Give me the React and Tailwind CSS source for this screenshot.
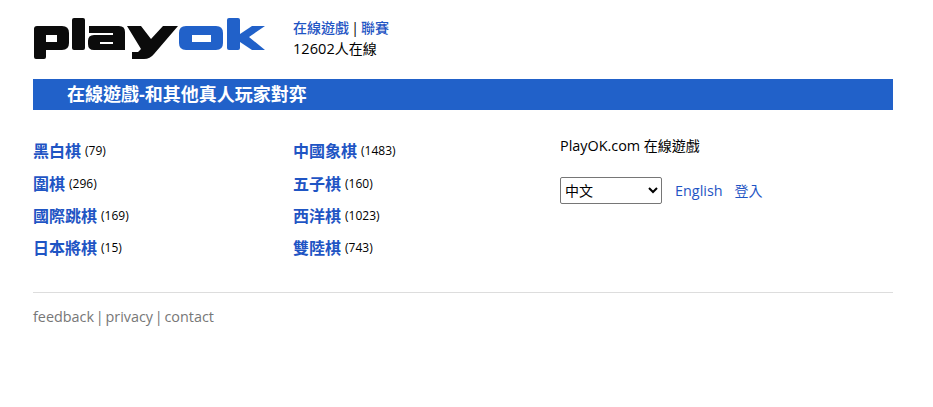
import React from 'react';

const LINK = 'text-[#1f55c4] no-underline';

const gamesLeft = [
  ['黑白棋', 79],
  ['圍棋', 296],
  ['國際跳棋', 169],
  ['日本將棋', 15],
];

const gamesRight = [
  ['中國象棋', 1483],
  ['五子棋', 160],
  ['西洋棋', 1023],
  ['雙陸棋', 743],
];

// playok logo
const Logo = () => (
  <svg width="234" height="46" viewBox="0 0 234 46" className="block">
    <g fill="#0b0b0b" fillRule="evenodd">
      <path d="M4 9 H29 Q36 9 36 16 V26 Q36 33 29 33 H13 V40 Q13 42 11 42 H3 Q1 42 1 40 V12 Q1 9 4 9 Z M13 18 V25 H24 V18 Z" />
      <rect x="39" y="1" width="13" height="32" rx="2" />
      <path d="M56 9 H86 Q92 9 92 15 V33 H61 Q55 33 55 27 V24 Q55 18 61 18 H80 V16 H56 Z M67 25 V27 H80 V25 Z" />
      <path d="M94 9 H108 L118 22 L130 9 H145 L121 37 Q117 42 111 42 H99 V35 H105 L108 32 Z" />
    </g>
    <g fill="#2161c9" fillRule="evenodd">
      <path d="M153 9 H183 Q190 9 190 16 V26 Q190 33 183 33 H153 Q146 33 146 26 V16 Q146 9 153 9 Z M159 18 V25 H178 V18 Z" />
      <rect x="194" y="1" width="13" height="32" rx="2" />
      <path d="M207 17 L219 9 H232 L216 20 L232 33 H219 L207 25 Z" />
    </g>
  </svg>
);

const GameList = ({ games }) => (
  <ul className="flex flex-col">
    {games.map(([name, count]) => (
      <li key={name} className="h-[32.4px] flex items-center">
        <a href="#" className={`${LINK} text-[16px] font-bold`}>{name}</a>
        <span className="text-[12px] ml-1 text-black">({count})</span>
      </li>
    ))}
  </ul>
);

export default function App() {
  return (
    <div className="px-[33px] w-[926px] bg-white text-black text-[14px] font-['Open_Sans','Noto_Sans_CJK_TC',sans-serif]">
      <div className="flex pt-[17px] h-[79px]">
        <div className="w-[260px]">
          <Logo />
        </div>
        <div className="leading-[21px]">
          <div className="[word-spacing:-1.5px]">
            <a href="#" className={`${LINK} font-medium`}>在線遊戲</a>
            {' | '}
            <a href="#" className={`${LINK} font-medium`}>聯賽</a>
          </div>
          <div><span className="text-[14.6px]">12602</span>人在線</div>
        </div>
      </div>

      <h1 className="h-[31px] bg-[#2161c9] pl-[34px] text-white text-[18px] font-bold leading-[31px]">
        在線遊戲-和其他真人玩家對弈
      </h1>

      <div className="flex pt-[25px] h-[182px]">
        <div className="w-[260px]"><GameList games={gamesLeft} /></div>
        <div className="w-[267px]"><GameList games={gamesRight} /></div>
        <div>
          <p className="leading-5 mt-[1px]"><span className="text-[14.4px]">PlayOK.com</span> 在線遊戲</p>
          <div className="flex items-center mt-[21px]">
            <select className="w-[102px] h-[27px] border border-[#767676] rounded-[2px] bg-white text-[14px]">
              <option>中文</option>
            </select>
            <a href="#" className={`${LINK} ml-[13px] text-[14.4px]`}>English</a>
            <a href="#" className={`${LINK} ml-[12px]`}>登入</a>
          </div>
        </div>
      </div>

      <div className="border-t border-[#dddddd] pt-[14px] text-[#777777] leading-5 text-[14.4px] [word-spacing:-2px]">
        <a href="#" className="text-[#777777]">feedback</a>
        {' | '}
        <a href="#" className="text-[#777777]">privacy</a>
        {' | '}
        <a href="#" className="text-[#777777]">contact</a>
      </div>
    </div>
  );
}
